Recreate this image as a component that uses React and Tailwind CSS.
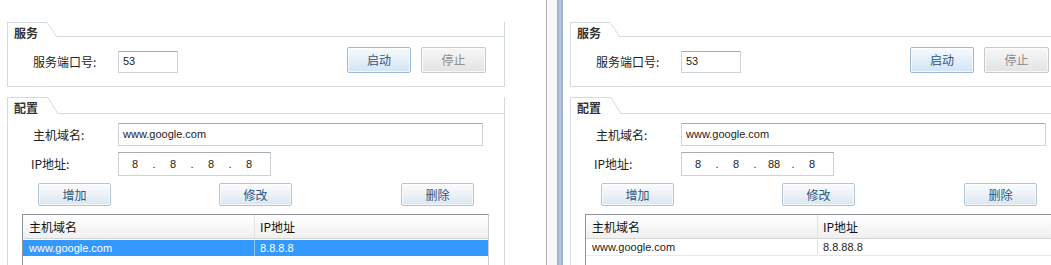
import React from "react";

const cjk = { fontFamily: '"Noto Sans CJK SC", "Liberation Sans", sans-serif' };
const latin = { fontFamily: '"Liberation Sans", "Noto Sans CJK SC", sans-serif' };

function GroupBox({ title, tabWidth, headerHeight, children, bodyClass }) {
  return (
    <div className="ml-[7px] w-[498px]">
      <div className="flex" style={{ height: headerHeight }}>
        <div
          className="relative border-l border-t border-[#d3dbe2]"
          style={{ width: tabWidth }}
        >
          <span
            className="absolute left-[6px] top-[3px] text-[12px] font-bold leading-[14px] text-[#333]"
            style={cjk}
          >
            {title}
          </span>
        </div>
        <svg width="10" height={headerHeight} className="shrink-0">
          <line x1="0" y1="0.5" x2="10" y2={headerHeight} stroke="#d3dbe2" strokeWidth="1" />
        </svg>
        <div className="flex-1 border-b border-r border-[#d3dbe2]" />
      </div>
      <div className={"border-x border-b border-[#d3dbe2] " + bodyClass}>{children}</div>
    </div>
  );
}

function TextBox({ className, children }) {
  return (
    <div
      className={
        "flex items-center border border-[#cdd3d9] border-t-[#a3abb3] bg-white text-[11px] text-[#222] " +
        className
      }
      style={latin}
    >
      {children}
    </div>
  );
}

function Btn({ label, kind = "normal", className }) {
  const styles = {
    primary: "border-[#9fb9d2] bg-gradient-to-b from-[#f6fafd] to-[#d2e4f4] text-[#2f5682]",
    normal: "border-[#b3c4d4] bg-gradient-to-b from-[#fbfcfd] to-[#dbe6f0] text-[#2f5682]",
    disabled: "border-[#c9c9c9] bg-gradient-to-b from-[#f7f7f7] to-[#e3e3e3] text-[#8a8a8a]",
  };
  return (
    <div
      className={
        "flex items-center justify-center rounded-[2px] border text-[12px] shadow-[inset_0_0_0_1px_rgba(255,255,255,0.7)] " +
        styles[kind] +
        " " +
        className
      }
      style={cjk}
    >
      {label}
    </div>
  );
}

function Panel({ ip, selected }) {
  return (
    <div className="w-[546px] pt-[22px]">
      <GroupBox title="服务" tabWidth={40} headerHeight={15} bodyClass="h-[50px] flex items-center">
        <span className="ml-[25px] w-[85px] text-[12px] text-[#222]" style={cjk}>
          服务端口号:
        </span>
        <TextBox className="h-[22px] w-[60px] pl-[4px]">53</TextBox>
        <div className="ml-auto mr-[18px] mb-[3px] flex gap-[10px]">
          <Btn label="启动" kind="primary" className="h-[26px] w-[64px]" />
          <Btn label="停止" kind="disabled" className="h-[26px] w-[65px]" />
        </div>
      </GroupBox>

      <div className="mt-[10px]">
        <GroupBox title="配置" tabWidth={41} headerHeight={17} bodyClass="h-[200px] pt-[9px]">
          <div className="flex items-center">
            <span className="ml-[25px] w-[85px] text-[12px] text-[#222]" style={cjk}>
              主机域名:
            </span>
            <TextBox className="h-[23px] w-[365px] pl-[4px]">www.google.com</TextBox>
          </div>
          <div className="mt-[6px] flex items-center">
            <span className="ml-[23px] w-[87px] text-[12px] text-[#222]" style={cjk}>
              IP地址:
            </span>
            <TextBox className="h-[24px] w-[153px] pl-[2px]">
              {ip.map((part, i) => (
                <React.Fragment key={i}>
                  <span className="w-[28px] text-center">{part}</span>
                  {i < 3 && <span className="w-[10px] text-center">.</span>}
                </React.Fragment>
              ))}
            </TextBox>
          </div>
          <div className="mt-[7px] flex">
            <Btn label="增加" className="ml-[30px] h-[23px] w-[73px]" />
            <Btn label="修改" className="ml-[108px] h-[23px] w-[73px]" />
            <Btn label="删除" className="ml-[109px] h-[23px] w-[73px]" />
          </div>
          <div className="ml-[14px] mt-[8px] h-[80px] w-[467px] border border-[#8d939a] border-b-[#c8cdd2] border-r-[#c8cdd2] bg-white">
            <div className="flex h-[24px] border-b border-[#d5d5d5] bg-gradient-to-b from-white to-[#f0f0f0] text-[12px] text-[#111]" style={cjk}>
              <div className="flex w-[232px] items-center border-r border-[#e2e2e2] pl-[6px]">主机域名</div>
              <div className="flex flex-1 items-center pl-[5px]">IP地址</div>
            </div>
            <div
              className={
                "mt-[1px] flex h-[16px] text-[11px] " +
                (selected
                  ? "bg-[#3399ff] text-white"
                  : "border-b border-[#e8e8e8] text-[#222]")
              }
              style={latin}
            >
              <div
                className={
                  "flex w-[232px] items-center pl-[6px] border-r " +
                  (selected ? "border-[#8cc4ff]" : "border-[#e4e4e4]")
                }
              >
                www.google.com
              </div>
              <div className="flex flex-1 items-center pl-[5px]">{ip.join(".")}</div>
            </div>
          </div>
        </GroupBox>
      </div>
    </div>
  );
}

export default function App() {
  return (
    <div className="flex h-[265px] w-[1051px] overflow-hidden bg-white">
      <div className="w-[547px] shrink-0 overflow-hidden border-r border-[#b5b5b5]">
        <Panel ip={["8", "8", "8", "8"]} selected />
      </div>
      <div className="w-[10px] shrink-0 bg-[#f6f7f9]" />
      <div className="w-[6px] shrink-0 bg-gradient-to-r from-[#93abc6] via-[#b8cadd] to-[#93abc6]" />
      <div className="flex-1 overflow-hidden">
        <Panel ip={["8", "8", "88", "8"]} selected={false} />
      </div>
    </div>
  );
}
